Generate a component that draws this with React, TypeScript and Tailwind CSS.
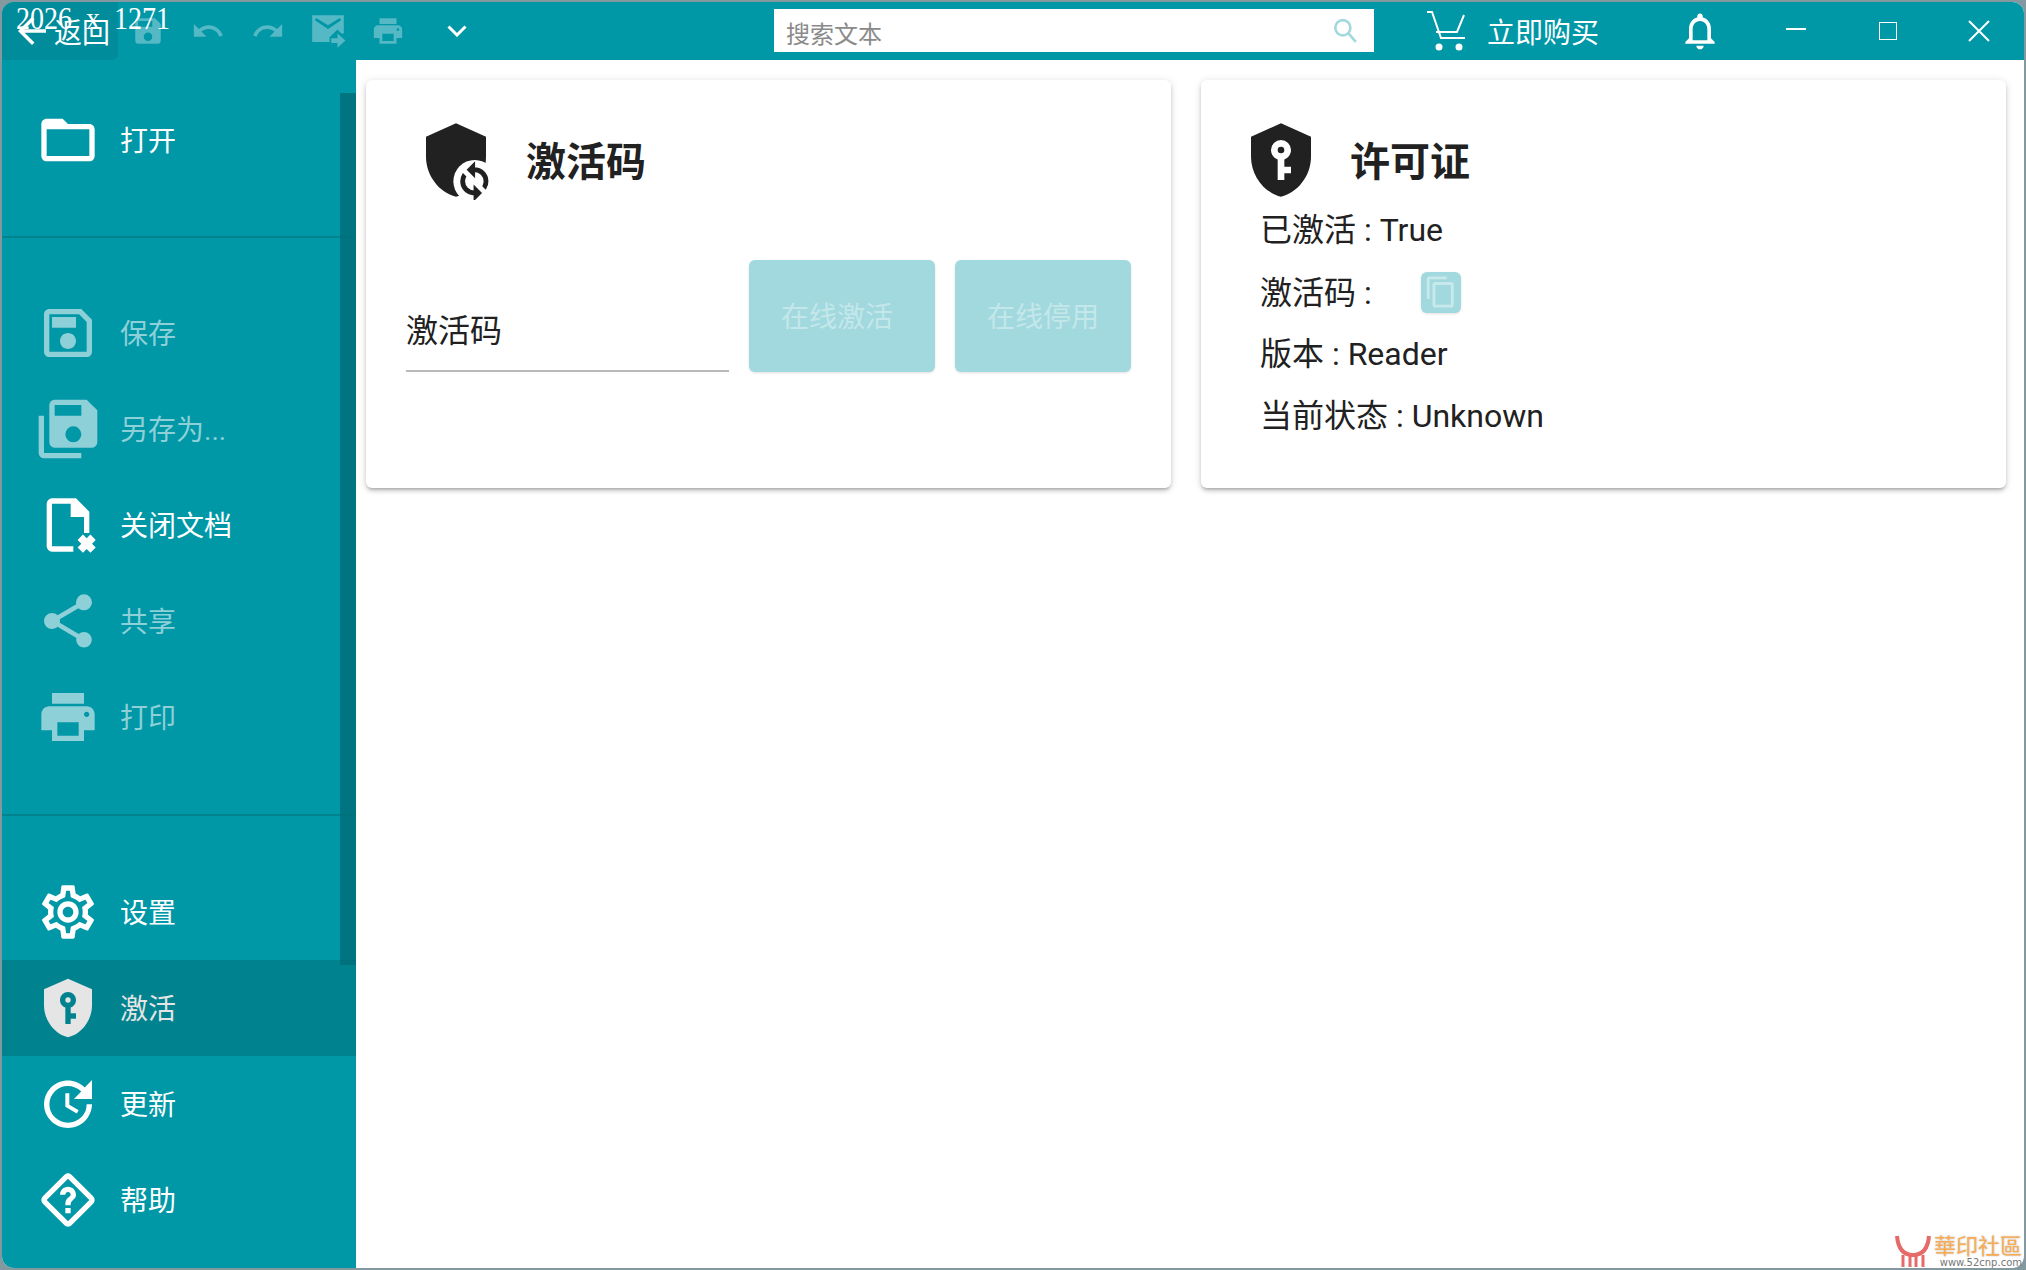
import type { ReactNode } from 'react'

const P = {
  folder: 'M20 6h-8l-2-2H4c-1.1 0-2 .9-2 2v12c0 1.1.9 2 2 2h16c1.1 0 2-.9 2-2V8c0-1.1-.9-2-2-2zm0 12H4V8h16v10z',
  saveOutline:
    'M17 3H5C3.89 3 3 3.9 3 5V19C3 20.1 3.89 21 5 21H19C20.1 21 21 20.1 21 19V7L17 3M19 19H5V5H16.17L19 7.83V19M12 12C10.34 12 9 13.34 9 15S10.34 18 12 18 15 16.66 15 15 13.66 12 12 12M6 6H15V10H6V6Z',
  saveAll:
    'M17,7V3H7V7H17M14,17A3,3 0 0,0 17,14A3,3 0 0,0 14,11A3,3 0 0,0 11,14A3,3 0 0,0 14,17M19,1L23,5V17A2,2 0 0,1 21,19H7C5.89,19 5,18.1 5,17V3A2,2 0 0,1 7,1H19M1,7H3V21H17V23H3A2,2 0 0,1 1,21V7Z',
  closeFile:
    'M6 2h9l5 5v8h-2V9h-5V4H6v16h8v2H6a2 2 0 0 1-2-2V4a2 2 0 0 1 2-2zM15.6 17.6 17.6 15.6 19 17 20.4 15.6 22.4 17.6 21 19 22.4 20.4 20.4 22.4 19 21 17.6 22.4 15.6 20.4 17 19z',
  share:
    'M18,16.08C17.24,16.08 16.56,16.38 16.04,16.85L8.91,12.7C8.96,12.47 9,12.24 9,12C9,11.76 8.96,11.53 8.91,11.3L15.96,7.19C16.5,7.69 17.21,8 18,8A3,3 0 0,0 21,5A3,3 0 0,0 18,2A3,3 0 0,0 15,5C15,5.24 15.04,5.47 15.09,5.7L8.04,9.81C7.5,9.31 6.79,9 6,9A3,3 0 0,0 3,12A3,3 0 0,0 6,15C6.79,15 7.5,14.69 8.04,14.19L15.16,18.34C15.11,18.55 15.08,18.77 15.08,19C15.08,20.61 16.39,21.91 18,21.91C19.61,21.91 20.92,20.61 20.92,19A2.92,2.92 0 0,0 18,16.08Z',
  print:
    'M19 8H5c-1.66 0-3 1.34-3 3v6h4v4h12v-4h4v-6c0-1.66-1.34-3-3-3zm-3 11H8v-5h8v5zm3-7c-.55 0-1-.45-1-1s.45-1 1-1 1 .45 1 1-.45 1-1 1zm-1-9H6v4h12V3z',
  gear:
    'M19.43 12.98c.04-.32.07-.64.07-.98 0-.34-.03-.66-.07-.98l2.11-1.65c.19-.15.24-.42.12-.64l-2-3.46c-.09-.16-.26-.25-.44-.25-.06 0-.12.01-.17.03l-2.49 1c-.52-.4-1.08-.73-1.69-.98l-.38-2.65C14.46 2.18 14.25 2 14 2h-4c-.25 0-.46.18-.49.42l-.38 2.65c-.61.25-1.17.59-1.69.98l-2.49-1c-.06-.02-.12-.03-.18-.03-.17 0-.34.09-.43.25l-2 3.46c-.13.22-.07.49.12.64l2.11 1.65c-.04.32-.07.65-.07.98 0 .33.03.66.07.98l-2.11 1.65c-.19.15-.24.42-.12.64l2 3.46c.09.16.26.25.44.25.06 0 .12-.01.17-.03l2.49-1c.52.4 1.08.73 1.69.98l.38 2.65c.03.24.24.42.49.42h4c.25 0 .46-.18.49-.42l.38-2.65c.61-.25 1.17-.59 1.69-.98l2.49 1c.06.02.12.03.18.03.17 0 .34-.09.43-.25l2-3.46c.12-.22.07-.49-.12-.64l-2.11-1.65zm-1.98-1.71c.04.31.05.52.05.73 0 .21-.02.43-.05.73l-.14 1.13.89.7 1.08.84-.7 1.21-1.27-.51-1.04-.42-.9.68c-.43.32-.84.56-1.25.73l-1.06.43-.16 1.13-.2 1.35h-1.4l-.19-1.35-.16-1.13-1.06-.43c-.43-.18-.83-.41-1.23-.71l-.91-.7-1.06.43-1.27.51-.7-1.21 1.08-.84.89-.7-.14-1.13c-.03-.31-.05-.54-.05-.74s.02-.43.05-.73l.14-1.13-.89-.7-1.08-.84.7-1.21 1.27.51 1.04.42.9-.68c.43-.32.84-.56 1.25-.73l1.06-.43.16-1.13.2-1.35h1.39l.19 1.35.16 1.13 1.06.43c.43.18.83.41 1.23.71l.91.7 1.06-.43 1.27-.51.7 1.21-1.07.85-.89.7.14 1.13zM12 8c-2.21 0-4 1.79-4 4s1.79 4 4 4 4-1.79 4-4-1.79-4-4-4zm0 6c-1.1 0-2-.9-2-2s.9-2 2-2 2 .9 2 2-.9 2-2 2z',
  shieldKey:
    'M12,8A1,1 0 0,1 13,9A1,1 0 0,1 12,10A1,1 0 0,1 11,9A1,1 0 0,1 12,8M21,11C21,16.55 17.16,21.74 12,23C6.84,21.74 3,16.55 3,11V5L12,1L21,5V11M12,6A3,3 0 0,0 9,9C9,10.31 9.83,11.42 11,11.83V18H13V16H15V14H13V11.83C14.17,11.42 15,10.31 15,9A3,3 0 0,0 12,6Z',
  update:
    'M21 10.12h-6.78l2.74-2.82c-2.73-2.7-7.15-2.8-9.88-.1-2.73 2.71-2.73 7.08 0 9.79s7.15 2.71 9.88 0C18.32 15.65 19 14.08 19 12.1h2c0 1.98-.88 4.55-2.64 6.29-3.51 3.48-9.21 3.48-12.72 0-3.5-3.47-3.53-9.11-.02-12.58s9.14-3.47 12.65 0L21 3v7.12zM12.5 8v4.25l3.5 2.08-.72 1.21L11 13V8h1.5z',
  help:
    'M12 2C11.5 2 11 2.19 10.59 2.59L2.59 10.59C1.8 11.37 1.8 12.63 2.59 13.41L10.59 21.41C11.37 22.2 12.63 22.2 13.41 21.41L21.41 13.41C22.2 12.63 22.2 11.37 21.41 10.59L13.41 2.59C13 2.19 12.5 2 12 2M12 4L20 12L12 20L4 12L12 4M11 15H13V17H11V15M12 7C10.34 7 9 8.34 9 10H11C11 9.45 11.45 9 12 9S13 9.45 13 10C13 11 11 10.88 11 13.5V14H13V13.5C13 12 15 11.88 15 10C15 8.34 13.66 7 12 7Z',
  save: 'M17 3H5c-1.11 0-2 .9-2 2v14c0 1.1.89 2 2 2h14c1.1 0 2-.9 2-2V7l-4-4zm-5 16c-1.66 0-3-1.34-3-3s1.34-3 3-3 3 1.34 3 3-1.34 3-3 3zm3-10H5V5h10v4z',
  undo: 'M12.5 8c-2.65 0-5.05.99-6.9 2.6L2 7v9h9l-3.62-3.62c1.39-1.16 3.16-1.88 5.12-1.88 3.54 0 6.55 2.31 7.6 5.5l2.37-.78C21.08 11.03 17.15 8 12.5 8z',
  redo: 'M18.4 10.6C16.55 8.99 14.15 8 11.5 8c-4.65 0-8.58 3.03-9.96 7.22L3.9 16c1.05-3.19 4.05-5.5 7.6-5.5 1.95 0 3.73.72 5.12 1.88L13 16h9V7l-3.6 3.6z',
  mail: 'M2 2h20v11.5h-1.6L18 11l-5 5v3H2V2zm1.7 3.2 8.3 5.6 8.3-5.6-.9-1.4L12 8.4 4.6 3.8zM18 13.5l5 4.5-5 4.5v-3h-4v-3h4z',
  back: 'M20 11H7.83l5.59-5.59L12 4l-8 8 8 8 1.41-1.41L7.83 13H20v-2z',
  bell: 'M12 22c1.1 0 2-.9 2-2h-4c0 1.1.9 2 2 2zm6-6v-5c0-3.07-1.63-5.64-4.5-6.32V4c0-.83-.67-1.5-1.5-1.5s-1.5.67-1.5 1.5v.68C7.64 5.36 6 7.92 6 11v5l-2 2v1h16v-1l-2-2zm-2 1H8v-6c0-2.48 1.51-4.5 4-4.5s4 2.02 4 4.5v6z',
  copy: 'M19,21H8V7H19M19,5H8A2,2 0 0,0 6,7V21A2,2 0 0,0 8,23H19A2,2 0 0,0 21,21V7A2,2 0 0,0 19,5M16,1H4A2,2 0 0,0 2,3V17H4V3H16V1Z',
  sync: 'M12 4V1L8 5l4 4V6c3.31 0 6 2.69 6 6 0 1.01-.25 1.97-.7 2.8l1.46 1.46C19.54 15.03 20 13.57 20 12c0-4.42-3.58-8-8-8zm0 14c-3.31 0-6-2.69-6-6 0-1.01.25-1.97.7-2.8L5.24 7.74C4.46 8.97 4 10.43 4 12c0 4.42 3.58 8 8 8v3l4-4-4-4v3z',
}

function Icon({ d, className }: { d: string; className: string }) {
  return (
    <svg viewBox="0 0 24 24" fill="currentColor" className={className}>
      <path d={d} />
    </svg>
  )
}

function NavItem({ icon, label, disabled, active }: { icon: string; label: string; disabled?: boolean; active?: boolean }) {
  return (
    <div
      className={`flex h-[96px] items-center gap-[20px] pl-[34px] text-[28px] ${
        active ? 'bg-[#00838f] text-[#e5e5e5]' : disabled ? 'text-[#8dd0d8]' : 'text-white'
      }`}
    >
      <Icon d={icon} className="h-[64px] w-[64px] shrink-0" />
      <span className="mt-[3px]">{label}</span>
    </div>
  )
}

function ToolSlot({ icon, size = 'h-[34px] w-[34px]' }: { icon: string; size?: string }) {
  return (
    <div className="flex w-[60px] items-center justify-center text-[#54b8c5]">
      <Icon d={icon} className={size} />
    </div>
  )
}

function Card({ children }: { children: ReactNode }) {
  return (
    <section className="h-[408px] w-[805px] shrink-0 rounded-[6px] bg-white pt-[41px] shadow-[0_3px_3px_-2px_rgba(0,0,0,0.2),0_3px_4px_0_rgba(0,0,0,0.14),0_1px_8px_0_rgba(0,0,0,0.12)]">
      {children}
    </section>
  )
}

function ShieldSync() {
  return (
    <svg viewBox="0 0 24 24" className="h-[80px] w-[80px] shrink-0">
      <path fill="#212121" d="M12 1 21 5V11C21 16.55 17.16 21.74 12 23 6.84 21.74 3 16.55 3 11V5z" />
      <circle cx="17.6" cy="18.4" r="6.4" fill="#fff" />
      <g transform="translate(11.5 12.4) scale(0.5)">
        <path fill="#212121" stroke="#212121" strokeWidth="0.9" d={P.sync} />
      </g>
    </svg>
  )
}

function InfoRow({ children }: { children: ReactNode }) {
  return <div className="flex h-[62px] items-center text-[32px] text-[#212121]">{children}</div>
}

export default function App() {
  return (
    <div className="relative h-[1270px] w-[2026px] overflow-hidden bg-[#84989f] pb-[2px] pl-[2px] pr-[2px] pt-[2px] font-[Roboto,'Noto_Sans_CJK_SC',sans-serif]">
      <div className="flex h-full flex-col overflow-hidden rounded-[12px] bg-white">
        <header className="flex h-[58px] shrink-0 bg-[#0097a7] text-white">
          <div className="flex w-[116px] items-center rounded-br-[6px] bg-[#008c9b] pl-[9px] text-[28px]">
            <Icon d={P.back} className="h-[42px] w-[42px] shrink-0" />
            <span className="ml-[1px] mt-[5px]">返回</span>
          </div>
          <ToolSlot icon={P.save} />
          <ToolSlot icon={P.undo} />
          <ToolSlot icon={P.redo} />
          <ToolSlot icon={P.mail} size="h-[38px] w-[38px]" />
          <ToolSlot icon={P.print} />
          <div className="flex w-[78px] items-center justify-center">
            <svg viewBox="0 0 20 12" fill="none" stroke="currentColor" strokeWidth="3" className="h-[12px] w-[20px]">
              <path d="M1.5 1.5 10 10l8.5-8.5" />
            </svg>
          </div>
          <div className="ml-[278px] mt-[7px] flex h-[43px] w-[600px] items-center justify-between bg-white pl-[12px] pr-[16px]">
            <span className="mt-[8px] text-[24px] text-[#8a8a8a]">搜索文本</span>
            <svg viewBox="0 0 24 24" fill="none" stroke="#a2d9de" strokeWidth="2.4" className="h-[26px] w-[26px]">
              <circle cx="10" cy="9" r="7" />
              <path d="m15 14 7 8" />
            </svg>
          </div>
          <svg viewBox="0 0 42 42" fill="none" stroke="currentColor" strokeWidth="2" className="ml-[52px] mt-[8px] h-[42px] w-[42px]">
            <path d="M1 2h5l9 26h24" />
            <path d="M38 5l-7 17H10" />
            <circle cx="13" cy="37" r="3.5" fill="currentColor" stroke="none" />
            <circle cx="33" cy="37" r="3.5" fill="currentColor" stroke="none" />
          </svg>
          <span className="ml-[19px] mt-[5px] flex items-center text-[28px]">立即购买</span>
          <div className="ml-[79px] flex w-[44px] items-center">
            <Icon d={P.bell} className="h-[44px] w-[44px]" />
          </div>
          <div className="ml-[28px] flex w-[92px] items-center justify-center">
            <div className="mb-[4px] h-[2px] w-[20px] bg-white" />
          </div>
          <div className="flex w-[92px] items-center justify-center">
            <div className="h-[18px] w-[18px] border-[1.5px] border-white" />
          </div>
          <div className="flex w-[90px] items-center justify-center">
            <svg viewBox="0 0 22 22" fill="none" stroke="currentColor" strokeWidth="2" className="h-[22px] w-[22px]">
              <path d="m1 1 20 20M21 1 1 21" />
            </svg>
          </div>
        </header>

        <div className="flex min-h-0 flex-1">
          <aside className="relative flex h-full w-[354px] shrink-0 flex-col bg-[#0097a7] pt-[32px]">
            <NavItem icon={P.folder} label="打开" />
            <div className="mt-[48px] h-[2px] bg-[#00838f]" />
            <div className="mt-[47px]">
              <NavItem icon={P.saveOutline} label="保存" disabled />
              <NavItem icon={P.saveAll} label="另存为..." disabled />
              <NavItem icon={P.closeFile} label="关闭文档" />
              <NavItem icon={P.share} label="共享" disabled />
              <NavItem icon={P.print} label="打印" disabled />
            </div>
            <div className="mt-[49px] h-[2px] bg-[#00838f]" />
            <div className="mt-[48px]">
              <NavItem icon={P.gear} label="设置" />
              <NavItem icon={P.shieldKey} label="激活" active />
              <NavItem icon={P.update} label="更新" />
              <NavItem icon={P.help} label="帮助" />
            </div>
            <div className="absolute right-0 top-[33px] h-[872px] w-[16px] bg-[#00707c]/90" />
          </aside>

          <main className="flex flex-1 items-start gap-[30px] pl-[10px] pt-[20px]">
            <Card>
              <div className="flex h-[78px] items-center gap-[29px] pl-[50px]">
                <ShieldSync />
                <h2 className="ml-[1px] mt-[6px] text-[40px] font-bold text-[#212121]">激活码</h2>
              </div>
              <div className="ml-[40px] mt-[61px] flex">
                <div className="flex h-[112px] w-[323px] items-end border-b-2 border-[#b9b9b9] pb-[15px] text-[32px] text-[#212121]">激活码</div>
                <button className="ml-[20px] h-[112px] w-[186px] rounded-[6px] bg-[#a2d9de] pr-[10px] pt-[4px] text-[28px] text-[#c4e7ea] shadow-sm">在线激活</button>
                <button className="ml-[20px] h-[112px] w-[176px] rounded-[6px] bg-[#a2d9de] pt-[4px] text-[28px] text-[#c4e7ea] shadow-sm">在线停用</button>
              </div>
            </Card>
            <Card>
              <div className="flex h-[78px] items-center gap-[29px] pl-[40px]">
                <Icon d={P.shieldKey} className="h-[80px] w-[80px] shrink-0 text-[#212121]" />
                <h2 className="mt-[6px] text-[40px] font-bold text-[#212121]">许可证</h2>
              </div>
              <div className="pl-[59px]">
                <InfoRow>已激活 : True</InfoRow>
                <InfoRow>
                  <span className="mt-[2px]">激活码 :</span>
                  <div className="ml-[49px] flex h-[41px] w-[40px] items-center justify-center rounded-[6px] bg-[#a2d9de] text-[#c8e9ec] shadow-sm">
                    <Icon d={P.copy} className="h-[34px] w-[34px]" />
                  </div>
                </InfoRow>
                <InfoRow>版本 : Reader</InfoRow>
                <InfoRow>当前状态 : Unknown</InfoRow>
              </div>
            </Card>
          </main>
        </div>
      </div>

      {/* overlays from the original capture */}
      <div className="absolute left-[16px] top-[-6px] origin-top scale-y-[1.15] whitespace-pre font-['Liberation_Serif',serif] text-[28px] text-white">2026  x  1271</div>
      <div className="absolute bottom-[2px] right-[4px] flex items-end gap-[3px]">
        <svg viewBox="0 0 36 34" fill="none" stroke="#e56a6a" strokeWidth="4" className="h-[34px] w-[36px]">
          <path d="M2 2c1 12 6 19 16 19S33 14 34 2" />
          <path d="M8 33V21M28 33V21M15 33V21M21 33V21" strokeWidth="3" />
        </svg>
        <div className="flex flex-col items-end">
          <span className="text-[22px] leading-[25px] text-[#f8ad55] font-['Noto_Sans_CJK_TC',sans-serif] [text-shadow:0_0_2px_#bbb]">華印社區</span>
          <span className="text-[10px] leading-[11px] text-[#777] font-['DejaVu_Sans',sans-serif]">www.52cnp.com</span>
        </div>
      </div>
    </div>
  )
}
